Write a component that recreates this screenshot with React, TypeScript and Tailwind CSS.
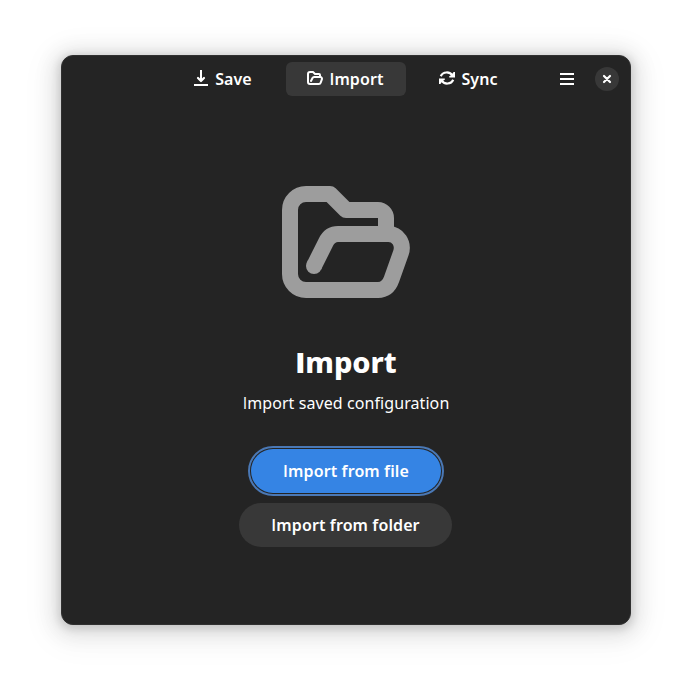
import type { ReactNode } from "react";

function FolderIcon({ className }: { className: string }) {
  return (
    <svg viewBox="0 0 16 16" className={className} fill="none" stroke="currentColor" strokeWidth="2">
      <path
        d="M4 11L5.5 8C5.85 7.3 6.3 7 7 7H13.3C14.5 7 15.25 8.2 14.87 9.35L13.7 12.65C13.4 13.5 12.9 14 12 14H3a2 2 0 0 1-2-2V4a2 2 0 0 1 2-2H6L8 4H12a1 1 0 0 1 1 1V7"
        strokeLinejoin="round"
      />
      <circle cx="4" cy="11" r="1" fill="currentColor" stroke="none" />
    </svg>
  );
}

function SaveIcon() {
  return (
    <svg viewBox="0 0 16 16" className="mb-0.5 size-4" fill="none" stroke="currentColor" strokeWidth="2">
      <path d="M8 0V10" />
      <path d="M5 8L8 11L11 8" strokeWidth="2.2" strokeLinecap="round" strokeLinejoin="round" />
      <path d="M1 15H15" />
    </svg>
  );
}

function SyncIcon() {
  return (
    <svg viewBox="0 0 16 16" className="mb-0.5 size-4" fill="none" stroke="currentColor" strokeWidth="2.2">
      <path d="M1.8 6.2A6.4 5.9 0 0 1 13.4 5.6" />
      <path d="M14.2 9.8A6.4 5.9 0 0 1 2.6 10.4" />
      <path d="M16 2V7.5H10.2V6.3L12.5 5L14.6 2Z" fill="currentColor" stroke="none" />
      <path d="M0 14V8.5H5.8V9.7L3.5 11L1.4 14Z" fill="currentColor" stroke="none" />
    </svg>
  );
}

// Capital I without slab serifs, followed by the rest of the label.
function ImportText({ rest = "" }: { rest?: string }) {
  return (
    <span className="whitespace-nowrap">
      <span className="font-['Open_Sans',sans-serif]">I</span>mport{rest}
    </span>
  );
}

function Tab({ icon, active = false, children }: { icon: ReactNode; active?: boolean; children: ReactNode }) {
  return (
    <button
      className={`flex h-[34px] w-[120px] items-center justify-center gap-1.5 rounded-md pr-px text-base font-semibold tracking-[0.1px] ${
        active ? "bg-[#383838]" : ""
      }`}
    >
      {icon}
      {children}
    </button>
  );
}

export default function App() {
  return (
    <div className="flex h-[692px] w-[692px] justify-center bg-white pt-[55px] font-['Noto_Sans',sans-serif] text-white">
      <main className="h-[570px] w-[570px] rounded-xl border border-[#303030] bg-[#242424] shadow-[0_2px_8px_2px_rgba(0,0,0,0.13),0_3px_20px_8px_rgba(0,0,0,0.09),0_6px_32px_14px_rgba(0,0,0,0.04)]">
        <header className="flex h-[46px] items-center pl-[101px] pr-[11px]">
          <nav className="flex gap-[3px]">
            <Tab icon={<SaveIcon />}>Save</Tab>
            <Tab icon={<FolderIcon className="mb-0.5 size-4" />} active>
              <ImportText />
            </Tab>
            <Tab icon={<SyncIcon />}>Sync</Tab>
          </nav>
          <button className="ml-auto mr-5" aria-label="Menu">
            <svg viewBox="0 0 16 16" className="size-4" fill="currentColor">
              <path d="M1 2H15V4H1ZM1 7H15V9H1ZM1 12H15V14H1Z" />
            </svg>
          </button>
          <button className="flex size-6 items-center justify-center rounded-full bg-[#383838]" aria-label="Close">
            <svg viewBox="0 0 16 16" className="size-4" stroke="currentColor" strokeWidth="2.2" strokeLinecap="round">
              <path d="M5 5L11 11M11 5L5 11" />
            </svg>
          </button>
        </header>
        <section className="flex flex-col items-center pt-[76px]">
          <FolderIcon className="size-32 text-[#9d9d9d]" />
          <h1 className="mt-9 text-[29px] leading-10 font-extrabold">
            <ImportText />
          </h1>
          <p className="mt-[9px] text-base leading-6 tracking-[0.08px]">
            <ImportText rest=" saved configuration" />
          </p>
          <button className="mt-[34px] h-11 w-[190px] rounded-full bg-[#3584e4] text-base font-semibold tracking-[0.11px] outline-2 outline-offset-1 outline-[#4a78b5]">
            <ImportText rest=" from file" />
          </button>
          <button className="mt-[10px] mr-px h-11 w-[213px] rounded-full bg-[#383838] text-base font-semibold tracking-[0.11px]">
            <ImportText rest=" from folder" />
          </button>
        </section>
      </main>
    </div>
  );
}
